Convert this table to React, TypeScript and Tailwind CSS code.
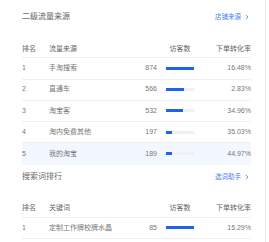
import React from 'react';

interface Row {
  rank: number;
  name: string;
  visitors: number;
  rate: string;
}

const sourceRows: Row[] = [
  { rank: 1, name: '手淘搜索', visitors: 874, rate: '16.48%' },
  { rank: 2, name: '直通车', visitors: 566, rate: '2.83%' },
  { rank: 3, name: '淘宝客', visitors: 532, rate: '34.96%' },
  { rank: 4, name: '淘内免费其他', visitors: 197, rate: '35.03%' },
  { rank: 5, name: '我的淘宝', visitors: 189, rate: '44.97%' },
];

const keywordRows: Row[] = [
  { rank: 1, name: '定制工作牌校牌水晶', visitors: 85, rate: '15.29%' },
];

const Chevron = () => (
  <svg width="4" height="6" viewBox="0 0 4 6" fill="none" className="ml-[4px]">
    <path d="M0.8 0.8L3 3L0.8 5.2" stroke="#4a7ff0" strokeWidth="0.8" />
  </svg>
);

const SectionTitle = ({ title, link }: { title: string; link: string }) => (
  <div className="flex items-center justify-between h-[10px]">
    <span className="text-[8px] leading-[10px] text-[#666]">{title}</span>
    <span className="flex items-center text-[6.5px] leading-[10px] text-[#4a7ff0] pr-[2px]">
      {link}
      <Chevron />
    </span>
  </div>
);

const Table = ({ label, rows, highlightLast }: { label: string; rows: Row[]; highlightLast?: boolean }) => {
  const max = Math.max(...rows.map((r) => r.visitors));
  return (
    <div className="text-[7px] text-[#777]">
      <div className="flex items-center h-[17.3px] border-b border-[#f0f0f0] text-[#666]">
        <div className="w-[27px]">排名</div>
        <div className="w-[78px]">{label}</div>
        <div className="w-[30px]" />
        <div className="ml-[9px] w-[28px] text-center whitespace-nowrap">访客数</div>
        <div className="w-[57px] text-right">下单转化率</div>
      </div>
      {rows.map((row, i) => {
        const last = highlightLast && i === rows.length - 1;
        return (
          <div
            key={row.rank}
            className={
              last
                ? 'flex items-center h-[21.25px] bg-[#f3f7ff]'
                : 'flex items-center h-[21.25px] border-b border-[#f0f0f0]'
            }
          >
            <div className="w-[27px]">{row.rank}</div>
            <div className="w-[78px] whitespace-nowrap">{row.name}</div>
            <div className="w-[30px] text-right">{row.visitors}</div>
            <div className="ml-[9px] w-[28px] h-[3px] bg-[#eef0f4]">
              <div className="h-full bg-[#2163e8]" style={{ width: `${(row.visitors / max) * 100}%` }} />
            </div>
            <div className="w-[57px] text-right">{row.rate}</div>
          </div>
        );
      })}
    </div>
  );
};

export default function App() {
  return (
    <div
      className="flex w-[269px] h-[242px] bg-white overflow-hidden"
      style={{ fontFamily: '"Liberation Sans", "Noto Sans CJK SC", sans-serif' }}
    >
      <div className="w-[266px] h-full border-r border-[#ebebeb] pl-[22px] pt-[12px]">
        <div className="w-[229px]">
          <SectionTitle title="二级流量来源" link="店铺来源" />
          <div className="mt-[19px]">
            <Table label="流量来源" rows={sourceRows} highlightLast />
          </div>
          <div className="mt-[7px]">
            <SectionTitle title="搜索词排行" link="选词助手" />
          </div>
          <div className="mt-[19px]">
            <Table label="关键词" rows={keywordRows} />
          </div>
        </div>
      </div>
    </div>
  );
}
